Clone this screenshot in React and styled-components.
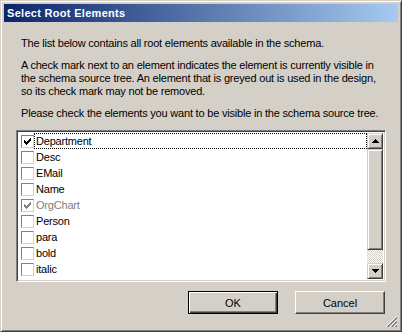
import React from 'react';
import styled, { createGlobalStyle } from 'styled-components';

const Face = '#d4d0c8';
const Shadow = '#808080';
const DarkShadow = '#404040';

const GlobalStyle = createGlobalStyle`
  html, body {
    margin: 0;
    padding: 0;
    background: ${Face};
  }
  * { box-sizing: border-box; }
`;

const Window = styled.div`
  position: relative;
  width: 402px;
  height: 332px;
  background: ${Face};
  border: 1px solid;
  border-color: ${Face} ${DarkShadow} ${DarkShadow} ${Face};
  box-shadow: inset 1px 1px #fff, inset -1px -1px ${Shadow};
  padding: 3px;
  display: flex;
  flex-direction: column;
  font-family: "Liberation Sans", Arial, sans-serif;
  font-size: 11px;
  letter-spacing: -0.2px;
  color: #000;
`;

const TitleBar = styled.div`
  height: 18px;
  display: flex;
  align-items: center;
  padding-left: 3px;
  background: linear-gradient(to right, #0a246a, #a6caf0);
  color: #fff;
  font-weight: bold;
  font-size: 11px;
  letter-spacing: 0.3px;
`;

const Body = styled.div`
  flex: 1;
  display: flex;
  flex-direction: column;
  padding: 15px 12px 0 12px;
`;

const Para = styled.p`
  margin: 0 0 ${p => p.$gap}px 0;
  padding-left: 5px;
  line-height: 13px;
  white-space: nowrap;
`;

const ListBox = styled.div`
  height: 152px;
  display: flex;
  background: #fff;
  border: 1px solid;
  border-color: ${Shadow} #fff #fff ${Shadow};
  box-shadow: inset 1px 1px ${DarkShadow}, inset -1px -1px ${Face};
  padding: 2px;
`;

const Items = styled.div`
  flex: 1;
  display: flex;
  flex-direction: column;
`;

const Row = styled.div`
  height: 16px;
  display: flex;
  align-items: center;
  padding-left: 2px;
`;

const Box = styled.span`
  width: 13px;
  height: 13px;
  flex: none;
  display: flex;
  align-items: center;
  justify-content: center;
  background: #fff;
  border: 1px solid;
  border-color: ${Shadow} ${Face} ${Face} ${Shadow};
`;

const Label = styled.span`
  flex: ${p => (p.$focus ? 1 : 'none')};
  height: 16px;
  line-height: 14px;
  padding-left: 1px;
  border: 1px ${p => (p.$focus ? 'dotted #000' : 'solid transparent')};
  color: ${p => (p.$disabled ? Shadow : '#000')};
`;

const ScrollBar = styled.div`
  width: 16px;
  display: flex;
  flex-direction: column;
`;

const ScrollButton = styled.div`
  height: ${p => p.$h}px;
  flex: none;
  display: flex;
  align-items: center;
  justify-content: center;
  background: ${Face};
  border: 1px solid;
  border-color: ${Face} ${DarkShadow} ${DarkShadow} ${Face};
  box-shadow: inset 1px 1px #fff, inset -1px -1px ${Shadow};
`;

const Track = styled.div`
  flex: 1;
  background: repeating-conic-gradient(${Face} 0 25%, #fff 0 50%) 0 0 / 2px 2px;
`;

const ButtonRow = styled.div`
  display: flex;
  justify-content: flex-end;
  gap: 17px;
  margin-top: 9px;
  padding-right: 1px;
`;

const Button = styled.button`
  width: 90px;
  height: 23px;
  padding: 0;
  font-family: "Liberation Sans", Arial, sans-serif;
  font-size: 11px;
  color: #000;
  background: ${Face};
  border: 1px solid;
  border-color: ${p => (p.$default ? '#000' : `#fff ${DarkShadow} ${DarkShadow} #fff`)};
  box-shadow: ${p =>
    p.$default
      ? `inset 1px 1px #fff, inset -1px -1px ${DarkShadow}, inset -2px -2px ${Shadow}`
      : `inset -1px -1px ${Shadow}`};
`;

const Grip = styled.svg`
  position: absolute;
  right: 3px;
  bottom: 3px;
`;

const Check = ({ color }) => (
  <svg width="7" height="7" viewBox="0 0 7 7" shapeRendering="crispEdges">
    <path
      d="M0 2h1v3h-1zM1 3h1v3h-1zM2 4h1v3h-1zM3 3h1v3h-1zM4 2h1v3h-1zM5 1h1v3h-1zM6 0h1v3h-1z"
      fill={color}
    />
  </svg>
);

const Arrow = ({ down }) => (
  <svg width="7" height="4" viewBox="0 0 7 4" shapeRendering="crispEdges">
    <path d={down ? 'M0 0h7L3.5 4z' : 'M3.5 0L7 4H0z'} fill="#000" />
  </svg>
);

const elements = [
  { name: 'Department', checked: true, focus: true },
  { name: 'Desc' },
  { name: 'EMail' },
  { name: 'Name' },
  { name: 'OrgChart', checked: true, disabled: true },
  { name: 'Person' },
  { name: 'para' },
  { name: 'bold' },
  { name: 'italic' },
];

export default function App() {
  return (
    <>
      <GlobalStyle />
      <Window>
        <TitleBar>Select Root Elements</TitleBar>
        <Body>
          <Para $gap={9}>The list below contains all root elements available in the schema.</Para>
          <Para $gap={9}>
            A check mark next to an element indicates the element is currently visible in
            <br />
            the schema source tree. An element that is greyed out is used in the design,
            <br />
            so its check mark may not be removed.
          </Para>
          <Para $gap={10}>Please check the elements you want to be visible in the schema source tree.</Para>
          <ListBox>
            <Items>
              {elements.map(el => (
                <Row key={el.name}>
                  <Box>{el.checked && <Check color={el.disabled ? Shadow : '#000'} />}</Box>
                  <Label $focus={el.focus} $disabled={el.disabled}>{el.name}</Label>
                </Row>
              ))}
            </Items>
            <ScrollBar>
              <ScrollButton $h={16}><Arrow /></ScrollButton>
              <ScrollButton $h={101} />
              <Track />
              <ScrollButton $h={16}><Arrow down /></ScrollButton>
            </ScrollBar>
          </ListBox>
          <ButtonRow>
            <Button $default>OK</Button>
            <Button>Cancel</Button>
          </ButtonRow>
        </Body>
        <Grip width="12" height="12" viewBox="0 0 12 12" shapeRendering="crispEdges">
          <path d="M11 0L0 11M11 4L4 11M11 8L8 11" stroke="#fff" />
          <path d="M11 1L1 11M11 2L2 11M11 5L5 11M11 6L6 11M11 9L9 11M11 10L10 11" stroke={Shadow} />
        </Grip>
      </Window>
    </>
  );
}
